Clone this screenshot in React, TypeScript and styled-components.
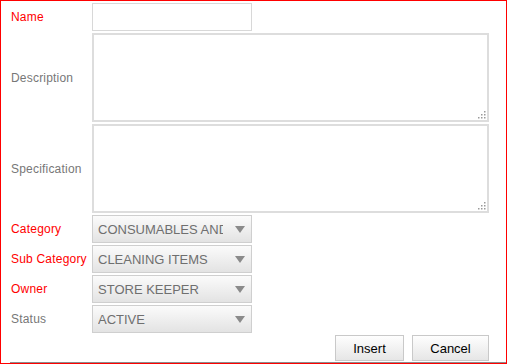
import React from "react";
import styled, { createGlobalStyle } from "styled-components";

const GlobalStyle = createGlobalStyle`
  html, body {
    margin: 0;
    padding: 0;
    background: #ffffff;
  }
  body {
    font-family: "Liberation Sans", Arial, sans-serif;
  }
`;

const Panel = styled.div`
  box-sizing: border-box;
  width: 507px;
  height: 364px;
  border: 1px solid #ff0000;
  border-bottom: none;
  display: flex;
  flex-direction: column;
`;

const Form = styled.div`
  flex: 1;
  display: grid;
  grid-template-columns: 81px 396px;
  row-gap: 2px;
  padding: 2px 0 0 10px;
  align-content: start;
`;

const Label = styled.label<{ $required?: boolean }>`
  display: flex;
  align-items: center;
  font-size: 12px;
  letter-spacing: 0.2px;
  white-space: nowrap;
  color: ${(p) => (p.$required ? "#ff0000" : "#777777")};
`;

const TextInput = styled.input`
  box-sizing: border-box;
  width: 160px;
  height: 28px;
  border: 1px solid #d8d8d8;
  margin: 0;
  padding: 0 4px;
  outline: none;
`;

const AreaWrap = styled.div`
  position: relative;
  width: 397px;
  height: 89px;
`;

const TextArea = styled.textarea`
  box-sizing: border-box;
  width: 100%;
  height: 100%;
  border: 2px solid #dddddd;
  margin: 0;
  resize: none;
  outline: none;
  display: block;
`;

const Grip = styled.svg`
  position: absolute;
  right: 3px;
  bottom: 3px;
`;

const SelectBox = styled.div`
  box-sizing: border-box;
  width: 160px;
  height: 28px;
  border: 1px solid #cfcfcf;
  background: linear-gradient(#fbfbfb, #e3e3e3);
  display: flex;
  align-items: center;
  padding: 0 0 0 5px;
  gap: 4px;
`;

const SelectText = styled.span`
  flex: 1;
  overflow: hidden;
  white-space: nowrap;
  font-size: 13px;
  color: #6f6f6f;
  text-transform: uppercase;
`;

const Arrow = styled.span`
  width: 0;
  height: 0;
  border-left: 5px solid transparent;
  border-right: 5px solid transparent;
  border-top: 7px solid #8a8a8a;
  margin-right: 6px;
  margin-left: 8px;
`;

const Actions = styled.div`
  display: flex;
  justify-content: flex-end;
  gap: 8px;
  padding: 2px 17px 0 0;
`;

const Button = styled.button<{ $w: number }>`
  box-sizing: border-box;
  width: ${(p) => p.$w}px;
  height: 26px;
  border: 1px solid #c9c9c9;
  background: linear-gradient(#fefefe, #e6e6e6);
  font-family: "Liberation Sans", Arial, sans-serif;
  font-size: 13px;
  color: #000000;
  padding: 0;
  margin: 0;
`;

const BottomRule = styled.div`
  margin: 1px 0 0 9px;
  height: 1px;
  background: #8c8c8c;
`;

const BottomEdge = styled.div`
  height: 1px;
  background: #ff0000;
`;

const ResizeGrip = () => (
  <Grip width="9" height="8" viewBox="0 0 9 8">
    <rect x="7" y="0" width="1.5" height="1.5" fill="#9a9a9a" />
    <rect x="4" y="3" width="1.5" height="1.5" fill="#9a9a9a" />
    <rect x="7" y="3" width="1.5" height="1.5" fill="#9a9a9a" />
    <rect x="1" y="6" width="1.5" height="1.5" fill="#9a9a9a" />
    <rect x="4" y="6" width="1.5" height="1.5" fill="#9a9a9a" />
    <rect x="7" y="6" width="1.5" height="1.5" fill="#9a9a9a" />
  </Grip>
);

const Select: React.FC<{ value: string }> = ({ value }) => (
  <SelectBox>
    <SelectText>{value}</SelectText>
    <Arrow />
  </SelectBox>
);

export default function App() {
  return (
    <>
      <GlobalStyle />
      <Panel>
        <Form>
          <Label $required>Name</Label>
          <div>
            <TextInput />
          </div>
          <Label>Description</Label>
          <AreaWrap>
            <TextArea />
            <ResizeGrip />
          </AreaWrap>
          <Label>Specification</Label>
          <AreaWrap>
            <TextArea />
            <ResizeGrip />
          </AreaWrap>
          <Label $required>Category</Label>
          <Select value="Consumables and cleaning" />
          <Label $required>Sub Category</Label>
          <Select value="Cleaning items" />
          <Label $required>Owner</Label>
          <Select value="Store keeper" />
          <Label>Status</Label>
          <Select value="Active" />
        </Form>
        <Actions>
          <Button $w={69}>Insert</Button>
          <Button $w={77}>Cancel</Button>
        </Actions>
        <BottomRule />
        <BottomEdge />
      </Panel>
    </>
  );
}
